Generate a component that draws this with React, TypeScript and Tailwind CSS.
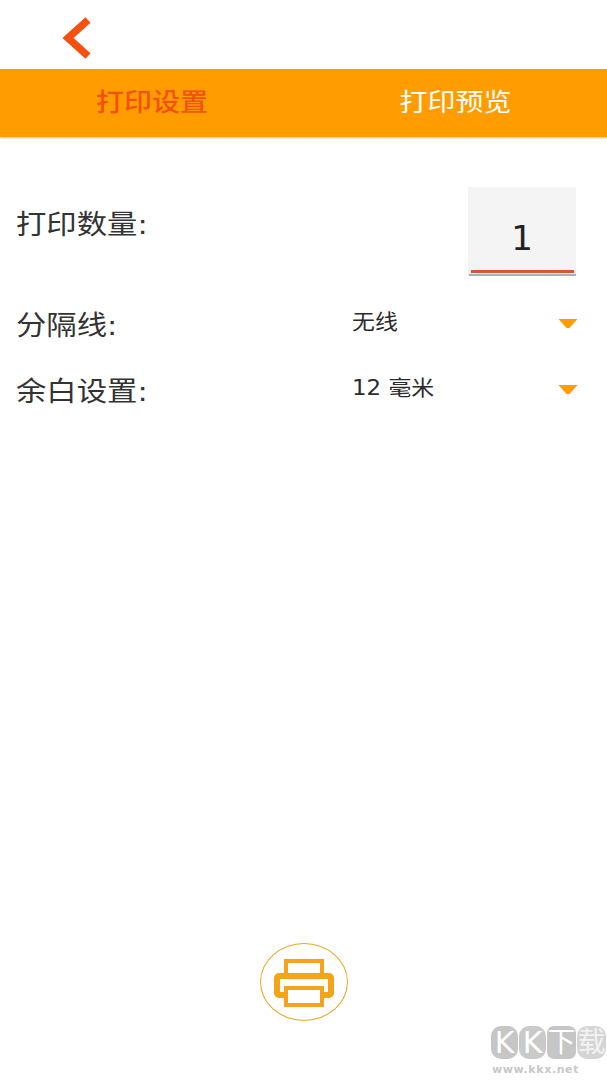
const fontStack = { fontFamily: '"DejaVu Sans", "Noto Sans CJK SC", sans-serif' }

function Caret() {
    return (
        <svg width="20" height="11" viewBox="0 0 20 11" className="block -mt-[4px]">
            <path d="M0.5 1h19l-8 9h-3z" fill="#ff9d00" />
        </svg>
    )
}

function SelectRow({ label, value, className }: { label: string; value: string; className: string }) {
    return (
        <div className={`flex items-center h-[40px] pl-[16px] pr-[29px] ${className}`}>
            <span className="w-[336px] pt-[2px] text-[27px] origin-left scale-x-[1.125] text-[#333] leading-[40px] whitespace-nowrap">{label}</span>
            <span className="flex-1 text-[21px] origin-left scale-x-[1.09] text-[#2b2b2b] leading-[40px] -mt-[7px] whitespace-nowrap">{value}</span>
            <Caret />
        </div>
    )
}

export default function App() {
    return (
        <div className="relative w-[607px] h-[1080px] bg-white overflow-hidden" style={fontStack}>
            <div className="h-[69px] pl-[60px] pt-[15px]">
                <svg width="32" height="46" viewBox="0 0 32 46" className="block">
                    <path d="M28 5 L8 23 L28 41" fill="none" stroke="#f4500f" strokeWidth="7.5" strokeLinejoin="miter" />
                </svg>
            </div>

            <div className="flex h-[68px] bg-[#ff9d00] shadow-[0_1px_2px_rgba(0,0,0,0.25)]">
                <div className="w-[304px] flex items-center justify-center text-[25px] scale-x-[1.12] font-medium text-[#f4500f]">打印设置</div>
                <div className="flex-1 flex items-center justify-center text-[25px] scale-x-[1.12] text-white">打印预览</div>
            </div>

            <div className="flex items-start justify-between pl-[16px] pr-[31px] pt-[50px]">
                <span className="mt-[18px] text-[27px] origin-left scale-x-[1.125] text-[#333] leading-[40px] whitespace-nowrap">打印数量:</span>
                <div className="w-[108px] h-[89px] bg-[#f4f4f4] flex flex-col items-center">
                    <span className="mt-[29px] text-[34px] leading-[44px] text-[#222]">1</span>
                    <div className="mt-[10px] w-[103px] h-[3px] bg-[#d9562f]" />
                    <div className="mt-[1px] w-[107px] h-[2px] bg-[#aab0b4]" />
                </div>
            </div>

            <SelectRow label="分隔线:" value="无线" className="mt-[29px]" />
            <SelectRow label="余白设置:" value="12 毫米" className="mt-[26px]" />

            <div className="absolute left-[260px] top-[943px] w-[88px] h-[78px] rounded-[50%] border border-[#e8a828] flex items-center justify-center">
                <svg width="60" height="48" viewBox="0 0 60 48" fill="none" className="block mt-[2px]">
                    <path d="M12 14V2h36v12" stroke="#f5a31a" strokeWidth="4" />
                    <path d="M10 36H5a2 2 0 0 1-2-2V19a2 2 0 0 1 2-2h50a2 2 0 0 1 2 2v15a2 2 0 0 1-2 2h-5" stroke="#f5a31a" strokeWidth="6" />
                    <path d="M12 29h36v17H12z" stroke="#f5a31a" strokeWidth="4" />
                </svg>
            </div>

            {/* marca de agua */}
            <div className="absolute left-[491px] top-[1026px] w-[116px]">
                <div className="flex gap-[1px] h-[33px] text-white text-[30px] leading-[33px] text-center">
                    <span className="w-[27px] bg-[#c6c6c6] rounded-[10px]">K</span>
                    <span className="w-[27px] bg-[#cacaca] rounded-[10px]">K</span>
                    <span className="w-[29px] bg-[#c6c6c6] rounded-[7px] text-[28px]">下</span>
                    <span className="w-[29px] bg-[#d4d4d4] rounded-[10px] text-[28px] text-[#f2f2f2]">载</span>
                </div>
                <div className="mt-[4px] ml-[1px] text-[11px] leading-[14px] font-bold tracking-[0.6px] text-[#c8c8c8]">www.kkx.net</div>
            </div>
        </div>
    )
}
